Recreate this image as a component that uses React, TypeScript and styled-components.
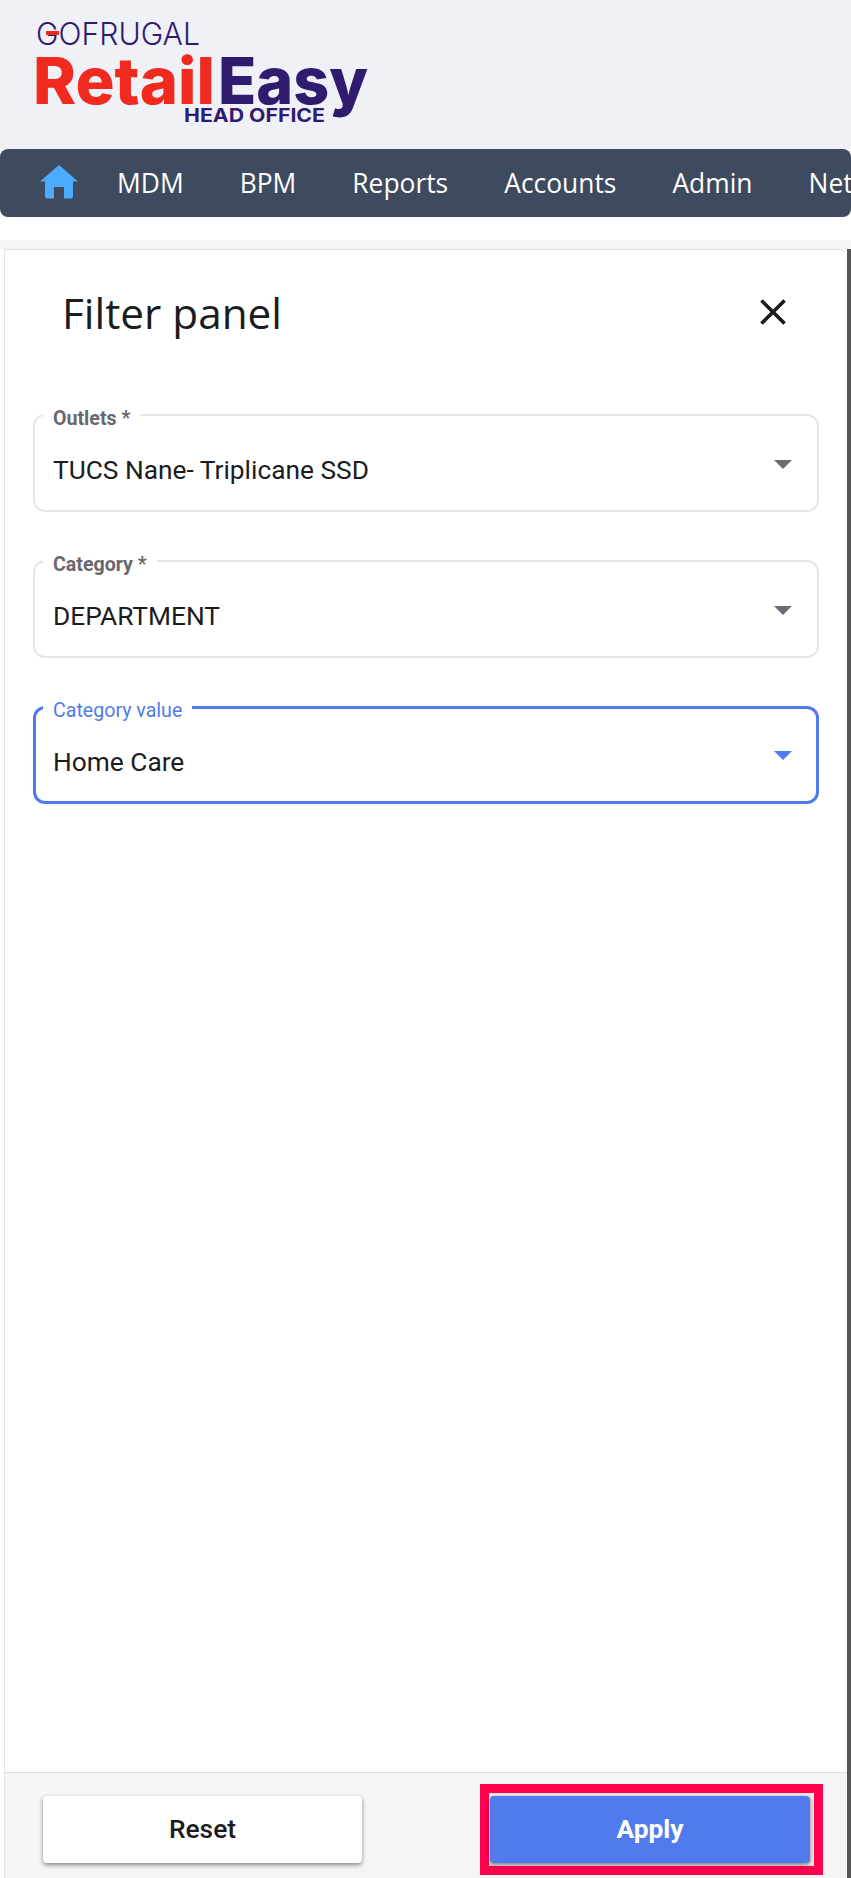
import styled, { createGlobalStyle } from "styled-components";

const GlobalStyle = createGlobalStyle`
  * {
    box-sizing: border-box;
  }

  html,
  body {
    margin: 0;
    padding: 0;
    width: 851px;
    height: 1878px;
    overflow: hidden;
    background-color: #ffffff;
  }
`;

const NAV_ITEMS = ["MDM", "BPM", "Reports", "Accounts", "Admin", "Network"];

const FIELDS = [
  { label: "Outlets *", value: "TUCS Nane- Triplicane SSD", active: false },
  { label: "Category *", value: "DEPARTMENT", active: false },
  { label: "Category value", value: "Home Care", active: true },
];

const Logo = () => (
  <svg width="345" height="115" viewBox="0 0 345 115">
    <text
      x="4"
      y="31"
      fontFamily="Inter, sans-serif"
      fontSize="31"
      fontWeight="300"
      fill="#2f1c6e"
      textLength="164"
      lengthAdjust="spacingAndGlyphs"
    >
      GOFRUGAL
    </text>
    <rect x="14" y="17" width="13" height="4" fill="#f02a1f" />
    <text
      x="1"
      y="90"
      fontFamily="Inter, sans-serif"
      fontSize="65"
      fontWeight="800"
      fill="#f02a1f"
      textLength="182"
      lengthAdjust="spacingAndGlyphs"
    >
      Retail
    </text>
    <text
      x="186"
      y="90"
      fontFamily="Inter, sans-serif"
      fontSize="65"
      fontWeight="800"
      fill="#2f1c6e"
      textLength="150"
      lengthAdjust="spacingAndGlyphs"
    >
      Easy
    </text>
    <text
      x="152"
      y="108"
      fontFamily="Inter, sans-serif"
      fontSize="19"
      fontWeight="700"
      fill="#2f1c6e"
      textLength="141"
      lengthAdjust="spacingAndGlyphs"
    >
      HEAD OFFICE
    </text>
  </svg>
);

const HomeIcon = () => (
  <svg width="40" height="34" viewBox="0 0 40 34">
    <path
      d="M20 0 L39 16.5 L34 16.5 L34 31 Q34 33.5 31.5 33.5 L25 33.5 L25 22 L15 22 L15 33.5 L8.5 33.5 Q6 33.5 6 31 L6 16.5 L1 16.5 Z"
      fill="#4dabff"
    />
  </svg>
);

const CloseIcon = () => (
  <svg width="44" height="44" viewBox="0 0 24 24">
    <path
      d="M19 6.41 17.59 5 12 10.59 6.41 5 5 6.41 10.59 12 5 17.59 6.41 19 12 13.41 17.59 19 19 17.59 13.41 12z"
      fill="#1c1c1e"
    />
  </svg>
);

const App = () => {
  return (
    <Page>
      <GlobalStyle />
      <Header>
        <Logo />
      </Header>
      <NavBar>
        <HomeLink>
          <HomeIcon />
        </HomeLink>
        {NAV_ITEMS.map((item) => (
          <NavItem key={item}>{item}</NavItem>
        ))}
      </NavBar>
      <Content>
        <Panel>
          <PanelHeader>
            <Title>Filter panel</Title>
            <CloseButton>
              <CloseIcon />
            </CloseButton>
          </PanelHeader>
          <FieldList>
            {FIELDS.map((field) => (
              <Field key={field.label} $active={field.active}>
                <FieldLabel $active={field.active}>{field.label}</FieldLabel>
                <FieldValue>{field.value}</FieldValue>
                <Arrow $active={field.active} />
              </Field>
            ))}
          </FieldList>
          <Footer>
            <ResetButton>Reset</ResetButton>
            <Highlight>
              <ApplyButton>Apply</ApplyButton>
            </Highlight>
          </Footer>
        </Panel>
        <Scrollbar />
      </Content>
    </Page>
  );
};

const Page = styled.div`
  width: 851px;
  height: 1878px;
  display: flex;
  flex-direction: column;
  overflow: hidden;
  background-color: #ffffff;
`;

const Header = styled.header`
  height: 149px;
  padding: 14px 0 0 32px;
  background-color: #f0f1f7;
`;

const NavBar = styled.nav`
  height: 68px;
  display: flex;
  align-items: center;
  flex-shrink: 0;
  padding-left: 39px;
  border-radius: 8px;
  background-color: #3e4a5d;
  white-space: nowrap;
  overflow: hidden;
`;

const HomeLink = styled.div`
  width: 78px;
  height: 34px;
  flex-shrink: 0;
  margin-top: -3px;
`;

const NavItem = styled.div`
  margin-right: 56px;
  font-family: "Open Sans", sans-serif;
  font-size: 26.4px;
  color: #ffffff;
`;

const Content = styled.div`
  flex: 1;
  display: flex;
  margin-top: 23px;
  padding: 9px 0 0 4px;
  background: linear-gradient(#f3f4f6 9px, #ffffff 9px);
`;

const Panel = styled.section`
  flex: 1;
  display: flex;
  flex-direction: column;
  border: 1px solid #e2e2e2;
  border-right: none;
  border-bottom: none;
  border-top-right-radius: 8px;
  background-color: #ffffff;
`;

const PanelHeader = styled.div`
  height: 151px;
  display: flex;
  justify-content: space-between;
  align-items: flex-start;
  padding: 38px 52px 0 57px;
`;

const Title = styled.h1`
  margin: 0;
  font-family: "Open Sans", sans-serif;
  font-size: 42.3px;
  line-height: 50px;
  font-weight: 400;
  color: #1c1c1e;
`;

const CloseButton = styled.div`
  width: 44px;
  height: 44px;
  margin-top: 2px;
`;

const FieldList = styled.div`
  flex: 1;
  display: flex;
  flex-direction: column;
  gap: 35px;
  padding: 0 28px;
`;

const Field = styled.fieldset<{ $active: boolean }>`
  position: relative;
  height: 111px;
  margin: 0;
  padding: 0 ${(p) => (p.$active ? 17 : 18)}px;
  border: ${(p) => (p.$active ? "3px solid #4f7bec" : "2px solid #e6e6e6")};
  border-radius: 12px;
`;

const FieldLabel = styled.legend<{ $active: boolean }>`
  padding: 8px 10px 0;
  margin-left: -10px;
  font-family: Roboto, sans-serif;
  font-size: 19.6px;
  line-height: 20px;
  font-weight: ${(p) => (p.$active ? 400 : 700)};
  color: ${(p) => (p.$active ? "#4f7bec" : "#68686e")};
`;

const FieldValue = styled.div`
  margin-top: 24.5px;
  font-family: Roboto, sans-serif;
  font-size: 26.3px;
  line-height: 32px;
  color: #1c1c1e;
`;

const Arrow = styled.span<{ $active: boolean }>`
  position: absolute;
  right: ${(p) => (p.$active ? 24 : 25)}px;
  top: ${(p) => (p.$active ? 30 : 31)}px;
  border-left: 9px solid transparent;
  border-right: 9px solid transparent;
  border-top: 9px solid ${(p) => (p.$active ? "#4f7bec" : "#6b6b75")};
`;

const Footer = styled.div`
  height: 106px;
  display: flex;
  justify-content: space-between;
  align-items: flex-start;
  padding: 11px 24px 0 38px;
  border-top: 1px solid #dcdcdc;
  background-color: #f5f5f5;
`;

const ResetButton = styled.button`
  width: 319px;
  height: 67px;
  margin-top: 12px;
  padding: 0 0 2px;
  border: none;
  border-radius: 4px;
  background-color: #ffffff;
  box-shadow: 0 2px 4px rgba(0, 0, 0, 0.45);
  font-family: Roboto, sans-serif;
  font-size: 26.3px;
  font-weight: 500;
  color: #1c1c1e;
`;

const Highlight = styled.div`
  width: 343px;
  height: 91px;
  padding: 3px 4px 3px 1px;
  border: 9px solid #ff004f;
  background-color: #efe6e8;
`;

const ApplyButton = styled.button`
  width: 100%;
  height: 67px;
  padding: 0 0 2px;
  border: none;
  border-radius: 4px;
  background-color: #517bec;
  box-shadow: 0 2px 4px rgba(0, 0, 0, 0.45);
  font-family: Roboto, sans-serif;
  font-size: 26.3px;
  font-weight: 700;
  color: #ffffff;
`;

const Scrollbar = styled.div`
  width: 4px;
  background-color: #555555;
  flex-shrink: 0;
`;

export default App;
